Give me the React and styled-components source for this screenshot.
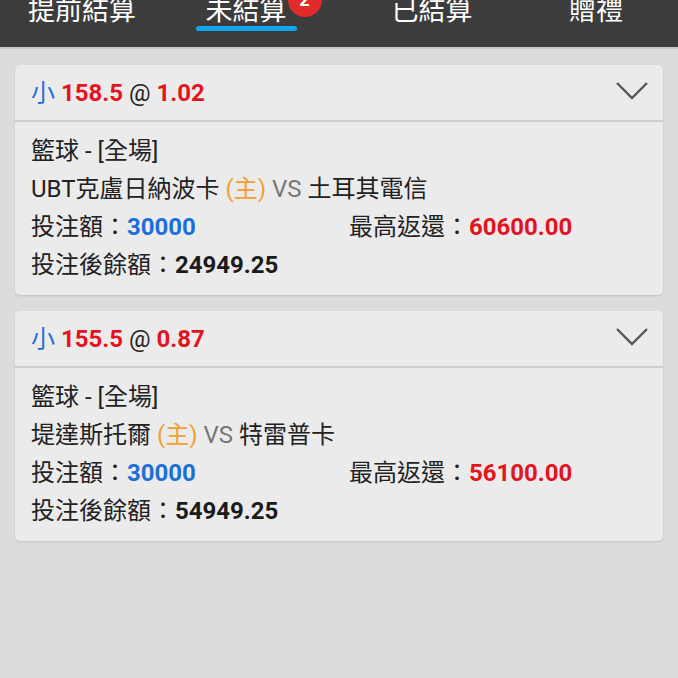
import React from 'react'
import styled, { createGlobalStyle } from 'styled-components'

const GlobalStyle = createGlobalStyle`
  html, body {
    margin: 0;
    padding: 0;
    background: #dcdcdc;
    font-family: Roboto, "Noto Sans CJK TC", sans-serif;
  }
`

const Page = styled.div`
  width: 678px;
  height: 678px;
  overflow: hidden;
  background: #dcdcdc;
`

const TabBar = styled.div`
  height: 47px;
  background: #3c3c3c;
  border-bottom: 2px solid #c9c9c9;
  display: flex;
  overflow: hidden;
`

const Tab = styled.div`
  flex: 1;
  display: flex;
  justify-content: center;
  padding-right: ${p => (p.$shift ? '22px' : '0')};
  margin-top: -4px;
  height: 52px;
`

const TabLabel = styled.span`
  position: relative;
  color: #ffffff;
  font-size: 27px;
  line-height: 30px;
  height: 30px;
  white-space: nowrap;
`

const Underline = styled.span`
  position: absolute;
  left: -10px;
  right: -10px;
  top: 30px;
  height: 5px;
  border-radius: 3px;
  background: #12a5ef;
`

const Badge = styled.span`
  position: absolute;
  left: calc(100% + 1px);
  top: -13px;
  width: 34px;
  height: 34px;
  border-radius: 50%;
  background: #e12a2a;
  color: #fff;
  font-size: 18px;
  font-weight: 700;
  line-height: 34px;
  text-align: center;
`

const List = styled.div`
  display: flex;
  flex-direction: column;
  gap: 16px;
  padding: 16px 15px 0;
`

const Card = styled.div`
  background: #ebebeb;
  border-radius: 5px;
  box-shadow: 0 1px 2px rgba(0, 0, 0, 0.12);
  overflow: hidden;
`

const CardHead = styled.div`
  box-sizing: border-box;
  height: 57px;
  display: flex;
  align-items: center;
  justify-content: space-between;
  padding: 0 14px 4px 16px;
  border-bottom: 2px solid #cfcfcf;
  font-size: 24px;
  color: #222;
`

const Pick = styled.span`
  color: #1d6fd8;
`

const Red = styled.span`
  color: #e4141e;
  font-weight: 700;
`

const CardBody = styled.div`
  padding: 10px 16px 11px;
  display: grid;
  grid-template-columns: 318px 1fr;
  font-size: 24px;
  line-height: 38px;
  color: #222;
`

const Line = styled.div`
  grid-column: ${p => (p.$full ? '1 / -1' : 'auto')};
  white-space: nowrap;
`

const Home = styled.span`
  color: #f0a031;
`

const Vs = styled.span`
  color: #777;
`

const Value = styled.span`
  font-weight: 700;
  color: ${p => p.$color || '#1b1b1b'};
`

const Chevron = () => (
  <svg width="34" height="22" viewBox="0 0 34 22">
    <path d="M2 3 L17 18 L32 3" fill="none" stroke="#575757" strokeWidth="2.4" />
  </svg>
)

const bets = [
  { line: '158.5', odds: '1.02', home: 'UBT克盧日納波卡', away: '土耳其電信', stake: '30000', max: '60600.00', left: '24949.25' },
  { line: '155.5', odds: '0.87', home: '堤達斯托爾', away: '特雷普卡', stake: '30000', max: '56100.00', left: '54949.25' },
]

const App = () => {
  return (
    <Page>
      <GlobalStyle />
      <TabBar>
        <Tab><TabLabel>提前結算</TabLabel></Tab>
        <Tab $shift>
          <TabLabel>
            未結算
            <Underline />
            <Badge>2</Badge>
          </TabLabel>
        </Tab>
        <Tab><TabLabel>已結算</TabLabel></Tab>
        <Tab><TabLabel>贈禮</TabLabel></Tab>
      </TabBar>
      <List>
        {bets.map((b, i) => (
          <Card key={i}>
            <CardHead>
              <span>
                <Pick>小</Pick> <Red>{b.line}</Red> @ <Red>{b.odds}</Red>
              </span>
              <Chevron />
            </CardHead>
            <CardBody>
              <Line $full>籃球 - [全場]</Line>
              <Line $full>
                {b.home} <Home>(主)</Home> <Vs>VS</Vs> {b.away}
              </Line>
              <Line>投注額：<Value $color="#1d6fd8">{b.stake}</Value></Line>
              <Line>最高返還：<Value $color="#e4141e">{b.max}</Value></Line>
              <Line $full>投注後餘額：<Value>{b.left}</Value></Line>
            </CardBody>
          </Card>
        ))}
      </List>
    </Page>
  )
}

export default App
